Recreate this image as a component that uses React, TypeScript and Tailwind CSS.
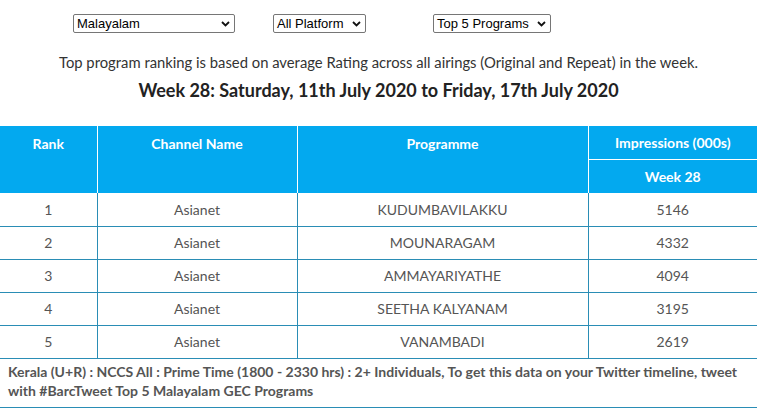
import React from "react";

function Chevron() {
  return (
    <svg width="9" height="6" viewBox="0 0 9 6" className="shrink-0">
      <path d="M1 1 L4.5 4.5 L8 1" fill="none" stroke="#111" strokeWidth="1.8" />
    </svg>
  );
}

function FakeSelect({ label, w }: { label: string; w: string }) {
  return (
    <div
      className={`${w} h-[19px] flex items-center justify-between pl-[3px] pr-[4px] border border-[#767676] rounded-[2px] bg-white text-[13px] text-black`}
      style={{ fontFamily: "Arial, 'Liberation Sans', sans-serif" }}
    >
      <span className="leading-none">{label}</span>
      <Chevron />
    </div>
  );
}

const rows = [
  ["1", "Asianet", "KUDUMBAVILAKKU", "5146"],
  ["2", "Asianet", "MOUNARAGAM", "4332"],
  ["3", "Asianet", "AMMAYARIYATHE", "4094"],
  ["4", "Asianet", "SEETHA KALYANAM", "3195"],
  ["5", "Asianet", "VANAMBADI", "2619"],
];

export default function App() {
  return (
    <div
      className="w-[757px] h-[410px] bg-white overflow-hidden"
      style={{ fontFamily: "Lato, 'Open Sans', sans-serif" }}
    >
      <div className="flex items-start pt-[14px] h-[46px]">
        <div className="ml-[73px]">
          <FakeSelect label="Malayalam" w="w-[162px]" />
        </div>
        <div className="ml-[38px]">
          <FakeSelect label="All Platform" w="w-[93px]" />
        </div>
        <div className="ml-[67px]">
          <FakeSelect label="Top 5 Programs" w="w-[118px]" />
        </div>
      </div>
      <p className="text-center text-[14.8px] text-[#333] leading-[20px] mt-[6px]">
        Top program ranking is based on average Rating across all airings (Original and Repeat) in the week.
      </p>
      <h2 className="text-center font-bold text-[18px] text-[#222] leading-[24px] mt-[6px]">
        Week 28: Saturday, 11th July 2020 to Friday, 17th July 2020
      </h2>
      <table className="mt-[24px] w-[757px] border-collapse table-fixed">
        <colgroup>
          <col className="w-[97px]" />
          <col className="w-[200px]" />
          <col className="w-[291px]" />
          <col className="w-[169px]" />
        </colgroup>
        <thead>
          <tr className="bg-[#03a9ef] text-white text-[14px] font-bold">
            <th rowSpan={2} className="align-top pt-[7px] border-r border-white font-bold">Rank</th>
            <th rowSpan={2} className="align-top pt-[7px] border-r border-white font-bold">Channel Name</th>
            <th rowSpan={2} className="align-top pt-[7px] border-r border-white font-bold">Programme</th>
            <th className="h-[33px] border-b border-white font-bold">Impressions (000s)</th>
          </tr>
          <tr className="bg-[#03a9ef] text-white text-[14px] font-bold">
            <th className="h-[34px] font-bold">Week 28</th>
          </tr>
        </thead>
        <tbody>
          {rows.map((r) => (
            <tr key={r[0]} className="h-[33px] text-[14px] text-[#555] border-b border-[#2a8db5]">
              <td className="text-center border-r border-[#2a8db5]">{r[0]}</td>
              <td className="text-center border-r border-[#2a8db5]">{r[1]}</td>
              <td className="text-center border-r border-[#2a8db5]">{r[2]}</td>
              <td className="text-center">{r[3]}</td>
            </tr>
          ))}
          <tr className="border-b border-[#2a8db5]">
            <td colSpan={4} className="px-[8px] pt-[3px] pb-[7px] text-[14px] font-bold text-[#555] leading-[19px]">
              Kerala (U+R) : NCCS All : Prime Time (1800 - 2330 hrs) : 2+ Individuals, To get this data on your Twitter timeline, tweet with #BarcTweet Top 5 Malayalam GEC Programs
            </td>
          </tr>
        </tbody>
      </table>
    </div>
  );
}
